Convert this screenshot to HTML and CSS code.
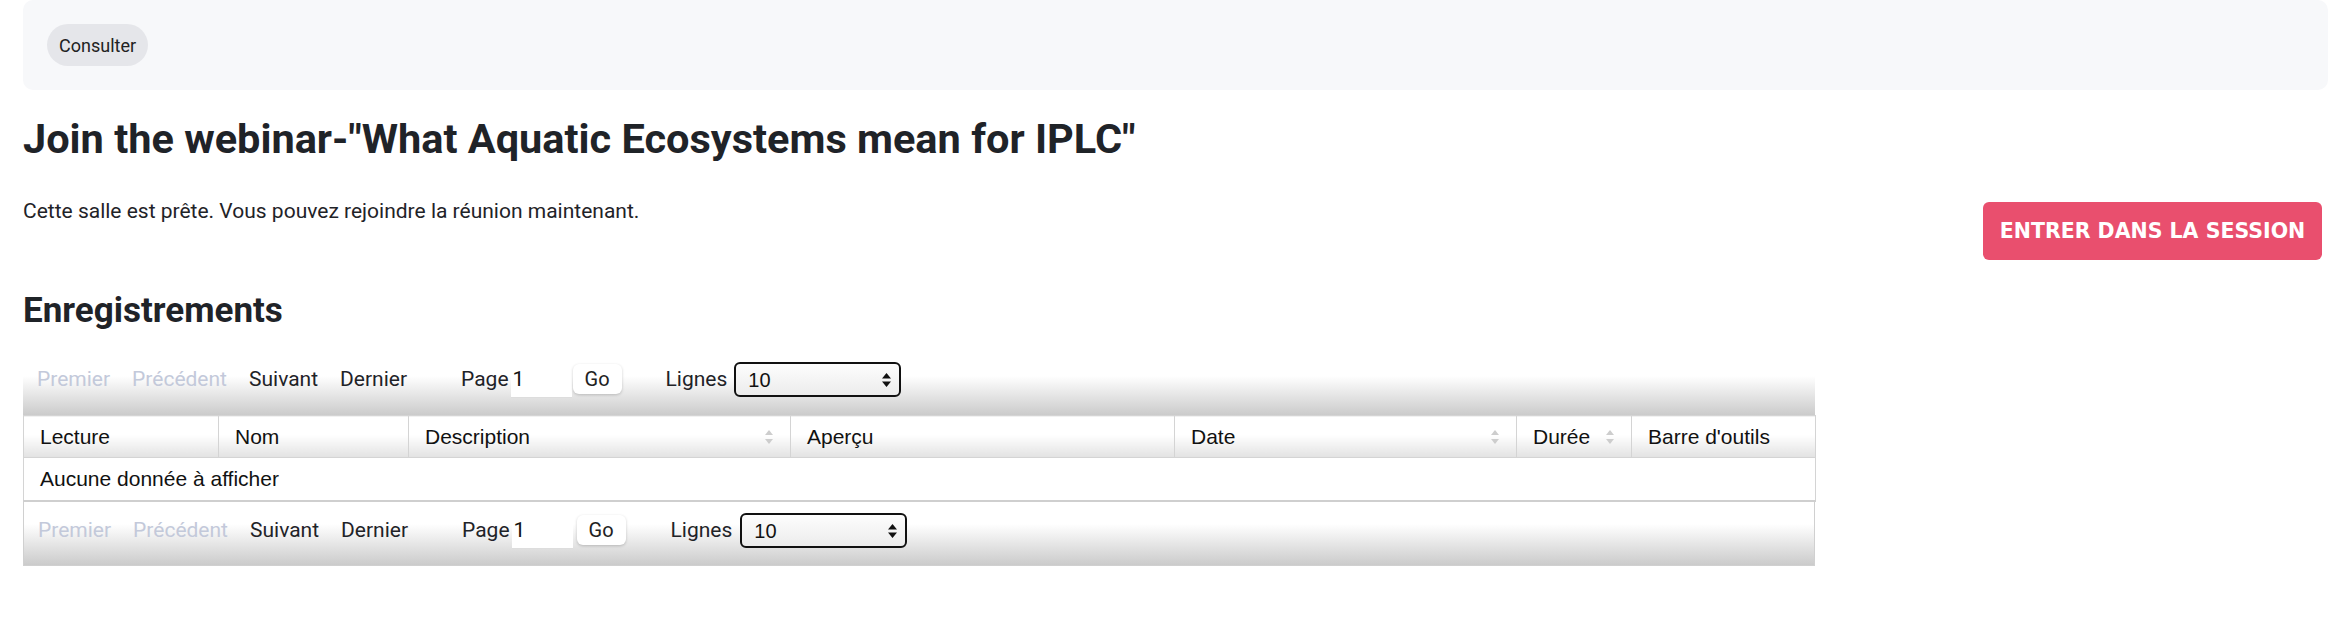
FILE: index.html
```html
<!DOCTYPE html>
<html lang="fr">
<head>
  <meta charset="UTF-8" />
  <meta name="viewport" content="width=device-width, initial-scale=1.0" />
  <title>Join the webinar</title>
  <link rel="stylesheet" href="styles.css">
</head>
<body>
  <div class="page">
    <div class="toolbar">
      <span class="pill">Consulter</span>
    </div>

    <h1>Join the webinar-"What Aquatic Ecosystems mean for IPLC"</h1>

    <div class="ready">
      <p>Cette salle est prête. Vous pouvez rejoindre la réunion maintenant.</p>
      <button class="join">Entrer dans la session</button>
    </div>

    <h2>Enregistrements</h2>

    <div class="grid">
      <div class="pager">
        <span class="off">Premier</span>
        <span class="off">Précédent</span>
        <span>Suivant</span>
        <span>Dernier</span>
        <span class="page-lbl">Page<input class="page-in" type="text" value="1"><button class="go">Go</button></span>
        <span class="rows-lbl">Lignes
          <span class="select"><span>10</span>
            <svg width="9" height="14" viewBox="0 0 9 14"><path d="M4.5 0 L9 5.5 H0 Z M0 8.5 H9 L4.5 14 Z" fill="#111"/></svg>
          </span>
        </span>
      </div>

      <table>
        <colgroup>
          <col style="width:195px"><col style="width:190px"><col style="width:382px"><col style="width:384px">
          <col style="width:342px"><col style="width:115px"><col style="width:184px">
        </colgroup>
        <tr>
          <th>Lecture</th>
          <th>Nom</th>
          <th class="sort">Description <i class="arrows"></i></th>
          <th>Aperçu</th>
          <th class="sort">Date <i class="arrows"></i></th>
          <th class="sort">Durée <i class="arrows"></i></th>
          <th>Barre d'outils</th>
        </tr>
        <tr>
          <td colspan="7">Aucune donnée à afficher</td>
        </tr>
      </table>

      <div class="pager bottom">
        <span class="off">Premier</span>
        <span class="off">Précédent</span>
        <span>Suivant</span>
        <span>Dernier</span>
        <span class="page-lbl">Page<input class="page-in" type="text" value="1"><button class="go">Go</button></span>
        <span class="rows-lbl">Lignes
          <span class="select"><span>10</span>
            <svg width="9" height="14" viewBox="0 0 9 14"><path d="M4.5 0 L9 5.5 H0 Z M0 8.5 H9 L4.5 14 Z" fill="#111"/></svg>
          </span>
        </span>
      </div>
    </div>
  </div>
</body>
</html>
```

FILE: styles.css
```css
body {
  margin: 0;
  font-family: 'Roboto', sans-serif;
  color: #1f2328;
  background: white;
}
.page {
  padding: 0 14px 0 23px;
}
.toolbar {
  background: #f7f8fa;
  height: 90px;
  border-radius: 10px;
  padding: 0 24px;
  display: flex;
  align-items: center;
}
.pill {
  background: #e5e6ea;
  border-radius: 21px;
  height: 42px;
  padding: 0 12px;
  display: flex;
  align-items: center;
  font-size: 18px;
  color: #222;
}
h1 {
  font-size: 41.5px;
  font-weight: 700;
  margin: 22px 0 0;
  line-height: 54px;
  color: #1f2328;
}
.ready {
  display: flex;
  justify-content: space-between;
  align-items: flex-start;
  margin-top: 31px;
}
.ready p {
  margin: 0;
  font-size: 21px;
  line-height: 28px;
}
.join {
  background: #e94f6e;
  color: white;
  border: none;
  border-radius: 6px;
  height: 58px;
  width: 339px;
  margin-right: 6px;
  margin-top: 5px;
  font-family: 'DejaVu Sans', sans-serif;
  font-weight: 700;
  font-size: 20.5px;
  text-transform: uppercase;
}
h2 {
  font-size: 35px;
  font-weight: 700;
  margin: 30px 0 0;
  line-height: 42px;
}
.grid {
  width: 1792px;
  margin-top: 23px;
}
.pager {
  height: 60px;
  display: flex;
  align-items: flex-start;
  padding: 2px 14px 0;
  font-size: 21px;
  background: linear-gradient(#fff 0%, #fff 35%, #cbcbcb 100%);
  box-sizing: border-box;
}
.pager > span {
  margin-right: 22px;
  line-height: 45px;
}
.pager .off {
  color: #c3c9da;
}
.page-lbl {
  display: flex;
  align-items: flex-start;
  margin-left: 32px;
}
.page-in {
  width: 61px;
  height: 41px;
  box-sizing: border-box;
  border: none;
  border-bottom: 1px solid #ddd;
  font-family: inherit;
  font-size: 21px;
  line-height: normal;
  padding: 4px 2px 0;
  color: #111;
  margin-left: 2px;
}
.go {
  background: white;
  border: none;
  border-radius: 6px;
  box-shadow: 0 1px 3px rgba(0,0,0,0.2);
  height: 30px;
  width: 49px;
  margin-top: 7px;
  margin-left: 1px;
  font-family: inherit;
  font-size: 20px;
  line-height: 30px;
  padding: 0;
  color: #222;
}
.rows-lbl {
  display: flex;
  align-items: flex-start;
  margin-left: 22px;
  gap: 7px;
}
.select {
  width: 167px;
  height: 35px;
  margin-top: 5px;
  box-sizing: border-box;
  border: 2px solid #111;
  border-radius: 6px;
  background: linear-gradient(#fdfdfd, #ececec);
  display: flex;
  align-items: center;
  justify-content: space-between;
  padding: 0 8px 0 12px;
  font-family: 'Liberation Sans', sans-serif;
  font-size: 20px;
  line-height: 1;
  color: #111;
}
table {
  width: 100%;
  border-collapse: collapse;
  table-layout: fixed;
  font-family: 'Liberation Sans', sans-serif;
  font-size: 21px;
  color: #111;
}
th, td {
  border: 1px solid #d4d4d4;
  text-align: left;
  font-weight: normal;
  padding: 0 0 0 16px;
}
th {
  height: 41px;
  background: linear-gradient(#fff 45%, #e2e2e2 100%);
}
td {
  height: 42px;
  border-bottom: 2px solid #cfcfcf;
}
.sort {
  position: relative;
}
.arrows {
  position: absolute;
  right: 17px;
  top: 14px;
  width: 8px;
  height: 14px;
}
.arrows::before, .arrows::after {
  content: "";
  position: absolute;
  left: 0;
  border-left: 4px solid transparent;
  border-right: 4px solid transparent;
}
.arrows::before {
  top: 0;
  border-bottom: 5px solid #cdcdcd;
}
.arrows::after {
  bottom: 0;
  border-top: 5px solid #cdcdcd;
}
.pager.bottom {
  height: 64px;
  padding-top: 6px;
  border: 1px solid #d0d0d0;
  border-top: none;
}
.pager.bottom .go {
  margin-left: 4px;
}
.pager.bottom .rows-lbl {
  margin-left: 23px;
  gap: 8px;
}
```
